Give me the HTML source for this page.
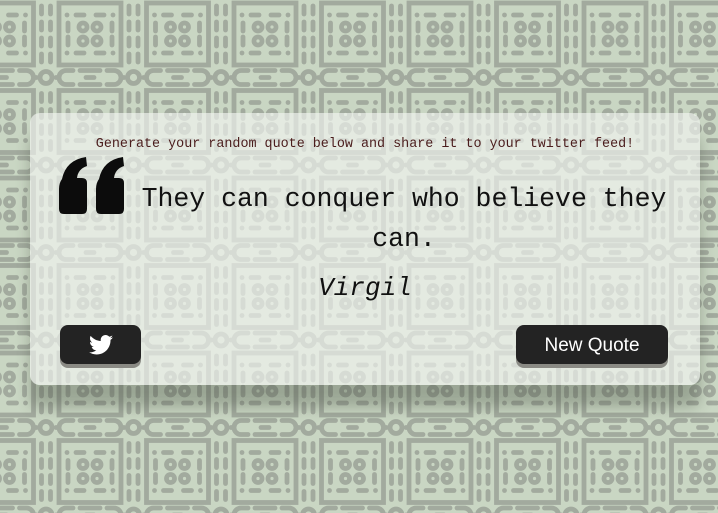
<!DOCTYPE html>
<html><head><meta charset="utf-8"><style>
html,body{margin:0;padding:0;width:718px;height:513px;overflow:hidden;background:#c9d6c3;}
#bg{position:absolute;left:0;top:0}
.card{position:absolute;left:30px;top:113px;width:670px;height:272px;border-radius:10px;background:rgba(242,245,240,0.66);box-shadow:0 22px 14px rgba(60,70,55,0.33);}
.top{position:absolute;left:0;width:100%;top:24px;text-align:center;font:13.4px "Liberation Mono",monospace;color:#4a1c1c;}
.q{position:absolute;left:96px;width:556px;top:66px;text-align:center;font:26.5px/40px "Liberation Mono",monospace;color:#111;}
.a{position:absolute;left:0;width:100%;top:160px;text-align:center;font:italic 26px "Liberation Mono",monospace;color:#111;}
.btn{position:absolute;top:212px;height:39px;background:#232323;border-radius:8px;box-shadow:0 4px 0 #8a8a84;color:#fff;}
.tw{left:30px;width:81px;}
.nq{left:486px;width:152px;font:19px/41px "Liberation Sans",sans-serif;text-align:center;}
.qm{position:absolute;left:28px;top:44px;}
</style></head><body>
<svg id="bg" width="718" height="513">
<defs>
<pattern id="p" width="87.5" height="87.5" patternUnits="userSpaceOnUse" patternTransform="translate(46,-10)">
<g fill="none" stroke="#a2aa9e" stroke-width="4.8" stroke-linecap="round">
<rect x="13" y="13" width="62" height="62"/>
<line x1="21" y1="25" x2="21" y2="25"/><line x1="30" y1="25" x2="38" y2="25"/><line x1="50" y1="25" x2="58" y2="25"/><line x1="67" y1="25" x2="67" y2="25"/>
<line x1="21" y1="63" x2="21" y2="63"/><line x1="30" y1="63" x2="38" y2="63"/><line x1="50" y1="63" x2="58" y2="63"/><line x1="67" y1="63" x2="67" y2="63"/>
<circle cx="37" cy="37" r="4"/><circle cx="51" cy="37" r="4"/>
<circle cx="37" cy="51" r="4"/><circle cx="51" cy="51" r="4"/>
<line x1="22" y1="33" x2="22" y2="41"/><line x1="22" y1="47" x2="22" y2="55"/>
<line x1="66" y1="33" x2="66" y2="41"/><line x1="66" y1="47" x2="66" y2="55"/>
<g id="col">
<line x1="-4.5" y1="16" x2="-4.5" y2="24"/><line x1="-4.5" y1="32" x2="-4.5" y2="40"/><line x1="-4.5" y1="48" x2="-4.5" y2="56"/><line x1="-4.5" y1="64" x2="-4.5" y2="72"/>
<line x1="4.5" y1="16" x2="4.5" y2="24"/><line x1="4.5" y1="32" x2="4.5" y2="40"/><line x1="4.5" y1="48" x2="4.5" y2="56"/><line x1="4.5" y1="64" x2="4.5" y2="72"/>
</g>
<use href="#col" x="87.5"/>
<g id="row">
<circle cx="0" cy="0" r="6"/><circle cx="87.5" cy="0" r="6"/>
<path d="M27 -7 H20 A7 7 0 0 0 20 7 H27"/><path d="M61 -7 H68 A7 7 0 0 1 68 7 H61"/>
<line x1="34" y1="-7" x2="54" y2="-7"/><line x1="34" y1="7" x2="54" y2="7"/><line x1="40" y1="0" x2="48" y2="0"/>
<line x1="10" y1="0" x2="11" y2="0"/><line x1="77" y1="0" x2="78" y2="0"/>
</g>
<use href="#row" y="87.5"/>
</g>
</pattern>
</defs>
<rect width="718" height="513" fill="url(#p)"/>
</svg>
<div class="card">
<div class="top">Generate your random quote below and share it to your twitter feed!</div>
<svg class="qm" width="68" height="58" viewBox="0 0 68 58"><path fill="#0c0c0c" d="M4 22 Q8 3 28 0 L29 9 Q20 12 19 21 L24 21 Q29 21 29 26 L29 52 Q29 57 24 57 L6 57 Q1 57 1 52 L1 32 Q1 26 4 22 Z M41 22 Q45 3 65 0 L66 9 Q57 12 56 21 L61 21 Q66 21 66 26 L66 52 Q66 57 61 57 L43 57 Q38 57 38 52 L38 32 Q38 26 41 22 Z"/></svg>
<div class="q">They can conquer who believe they can.</div>
<div class="a">Virgil</div>
<div class="btn tw"><svg style="position:absolute;left:29px;top:10px" width="24" height="20" viewBox="0 0 24 20"><path fill="#fff" d="M24 2.4c-.9.4-1.8.6-2.8.8 1-.6 1.8-1.6 2.2-2.7-1 .6-2 1-3.1 1.2C19.3.7 18 0 16.6 0c-2.7 0-4.9 2.2-4.9 4.9 0 .4 0 .8.1 1.1C7.7 5.8 4.1 3.9 1.7.9c-.4.7-.7 1.6-.7 2.5 0 1.7.9 3.2 2.2 4.1-.8 0-1.6-.2-2.2-.6v.1c0 2.4 1.7 4.4 3.9 4.8-.4.1-.8.2-1.3.2-.3 0-.6 0-.9-.1.6 2 2.4 3.4 4.6 3.4-1.7 1.3-3.8 2.1-6.1 2.1-.4 0-.8 0-1.2-.1 2.2 1.4 4.8 2.2 7.5 2.2 9.1 0 14-7.5 14-14v-.6c1-.7 1.8-1.6 2.5-2.5z"/></svg></div>
<div class="btn nq">New Quote</div>
</div>
</body></html>
